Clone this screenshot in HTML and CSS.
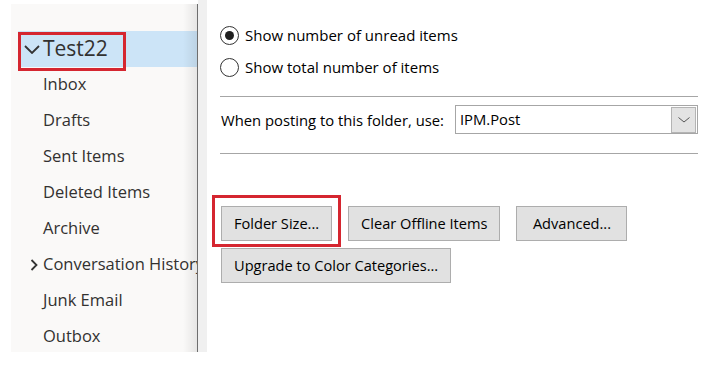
FILE: index.html
```html
<!DOCTYPE html>
<html lang="en">
<head>
    <meta charset="UTF-8">
    <title>Folder Properties</title>
    <link rel="stylesheet" href="styles.css">
</head>
<body>
    <div class="app">
        <div class="sidebar">
            <div class="folder selected">
                <span class="mark">
                    <svg class="chev-down" width="16" height="9" viewBox="0 0 16 9"><path d="M1 1 L8 8 L15 1" fill="none" stroke="#333" stroke-width="1.8"/></svg>
                    <span class="folder-name">Test22</span>
                </span>
            </div>
            <div class="folder">Inbox</div>
            <div class="folder">Drafts</div>
            <div class="folder">Sent Items</div>
            <div class="folder">Deleted Items</div>
            <div class="folder">Archive</div>
            <div class="folder has-children">
                <svg class="chev-right" width="8" height="12" viewBox="0 0 8 12"><path d="M1.5 1 L6.5 6 L1.5 11" fill="none" stroke="#333" stroke-width="1.8"/></svg>
                <span>Conversation History</span>
            </div>
            <div class="folder">Junk Email</div>
            <div class="folder">Outbox</div>
        </div>

        <div class="pane">
            <label class="radio">
                <span class="radio-dot checked"></span>
                Show number of unread items
            </label>
            <label class="radio">
                <span class="radio-dot"></span>
                Show total number of items
            </label>

            <hr class="sep top">

            <div class="post-row">
                <span>When posting to this folder, use:</span>
                <div class="combo">
                    <span class="combo-value">IPM.Post</span>
                    <span class="combo-btn">
                        <svg width="12" height="6" viewBox="0 0 12 6"><path d="M0.5 0.5 L6 5 L11.5 0.5" fill="none" stroke="#555" stroke-width="1"/></svg>
                    </span>
                </div>
            </div>

            <hr class="sep">

            <div class="buttons first">
                <button class="btn marked">Folder Size...</button>
                <button class="btn">Clear Offline Items</button>
                <button class="btn">Advanced...</button>
            </div>
            <div class="buttons">
                <button class="btn">Upgrade to Color Categories...</button>
            </div>
        </div>
    </div>
</body>
</html>
```

FILE: styles.css
```css
* { margin: 0; padding: 0; box-sizing: border-box; }
body { font-family: "Open Sans", "Noto Sans", sans-serif; background: #fff; color: #1a1a1a; width: 715px; height: 365px; overflow: hidden; }
.app { display: flex; height: 352px; }

.sidebar { position: relative; width: 187px; margin: 4px 0 0 11px; padding-top: 27px; background: #faf9f8; border-right: 1px solid #6e6e6e; overflow: hidden; white-space: nowrap; color: #323130; font-size: 16.5px; }
.sidebar::after { content: ''; position: absolute; top: 0; right: 0; bottom: 0; width: 14px; background: linear-gradient(to right, rgba(0,0,0,0), rgba(0,0,0,0.08)); }
.folder { height: 36px; display: flex; align-items: center; padding: 0 0 4px 32px; }
.folder.has-children { padding-left: 19px; }
.chev-right { flex-shrink: 0; margin: 3px 5px 0 0; }
.folder.selected { margin-left: 7px; padding: 0; background: #cce4f7; }
.mark { position: relative; display: flex; align-items: center; height: 100%; padding-left: 6px; }
.mark::after { content: ''; position: absolute; left: 0; top: 1px; width: 102px; height: 33px; border: 3px solid #d52630; }
.chev-down { flex-shrink: 0; margin-right: 3px; margin-top: 1px; }
.folder-name { font-size: 21px; padding-bottom: 2px; }

.pane { flex: 1; border-left: 9px solid #f0f0f0; padding: 19px 17px 0 13px; font-size: 15px; color: #000; }
.radio { display: flex; align-items: center; height: 32px; }
.radio-dot { width: 19px; height: 19px; border: 1.5px solid #333; border-radius: 50%; margin: 1px 6px 0 0; display: flex; align-items: center; justify-content: center; }
.radio-dot.checked::after { content: ''; width: 9px; height: 9px; border-radius: 50%; background: #1f1f1f; }

.sep { border: none; border-top: 1px solid #a6a6a6; }
.sep.top { margin-top: 13px; }
.post-row { display: flex; align-items: center; gap: 11px; margin: 8px 0 19px 1px; font-size: 14.8px; }
.combo { flex: 1; height: 29px; border: 1px solid #a6a6a6; display: flex; align-items: center; justify-content: space-between; padding: 0 1px 1px 4px; }
.combo-btn { width: 25px; height: 26px; margin-top: 1px; background: #e3e3e3; border: 1px solid #b4b4b4; display: flex; align-items: center; justify-content: center; }

.buttons { display: flex; gap: 16px; margin-left: 1px; }
.buttons.first { margin-top: 52px; }
.buttons + .buttons { margin-top: 7px; }
.btn { position: relative; min-width: 111px; height: 35px; padding: 0 12px 2px; background: #e1e1e1; border: 1px solid #adadad; font-family: inherit; font-size: 14.6px; color: #000; }
.btn.marked::after { content: ''; position: absolute; left: -10px; right: -10px; top: -12px; bottom: -7px; border: 3px solid #d52630; }
```
